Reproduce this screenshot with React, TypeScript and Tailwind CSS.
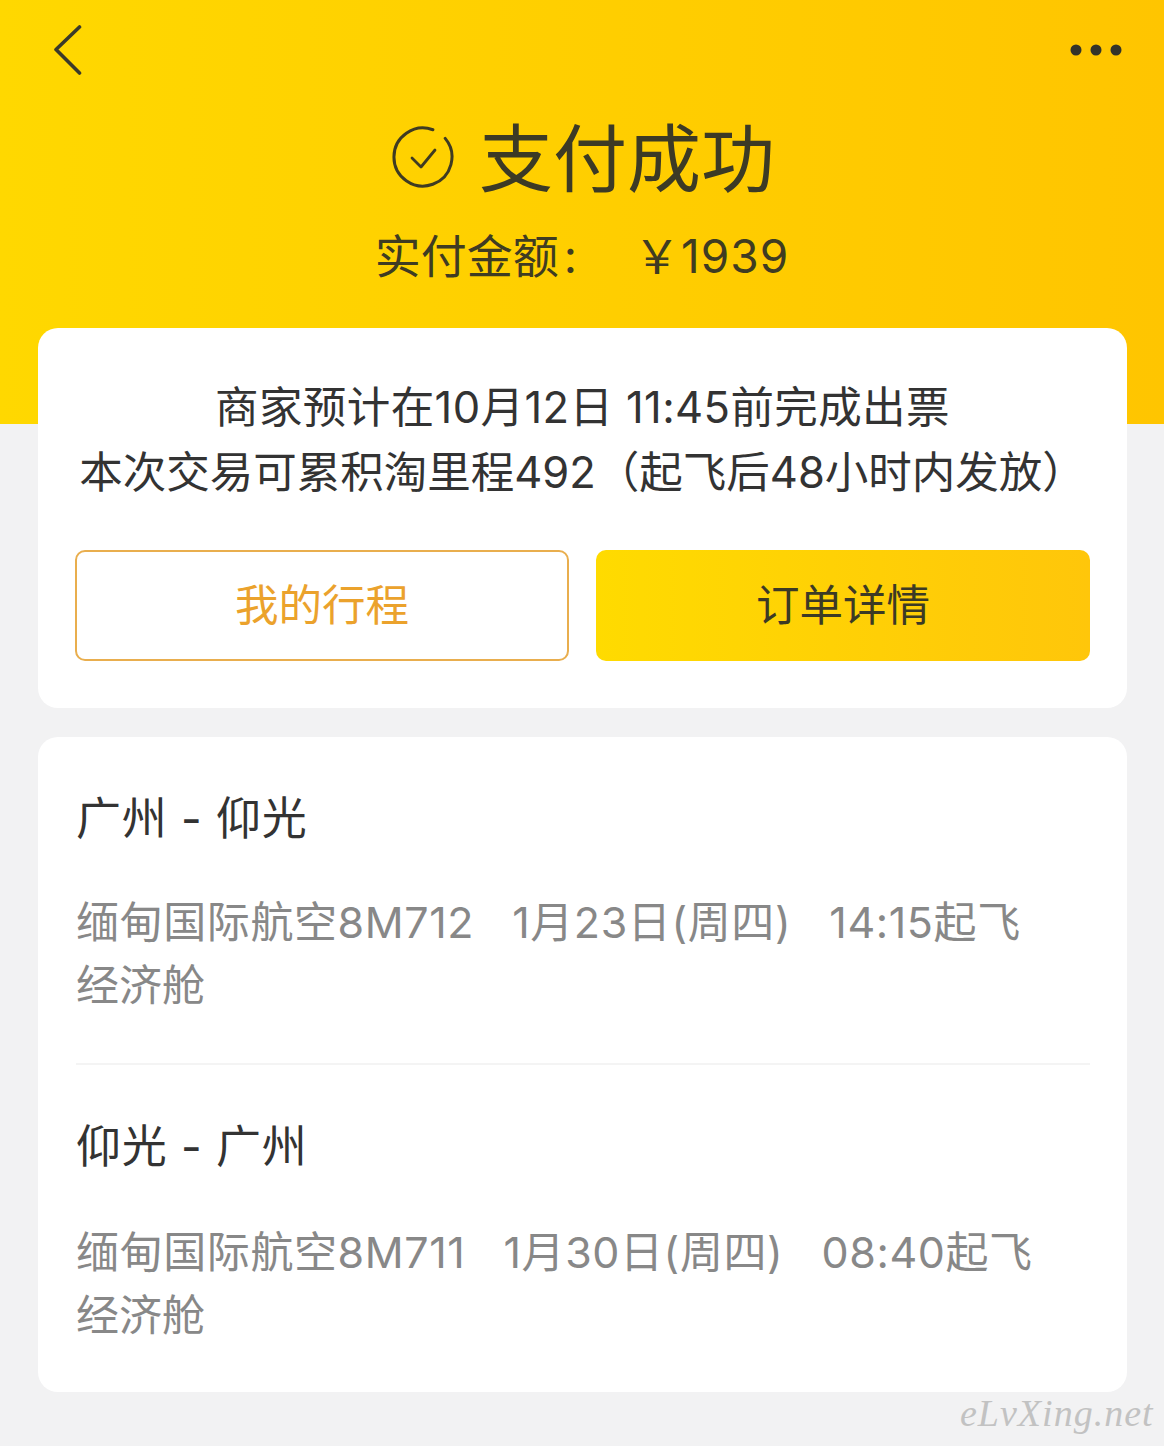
const font = '[font-family:Inter,"Noto_Sans_CJK_SC",sans-serif]';

function BackIcon() {
  return (
    <svg width="30" height="52" viewBox="0 0 30 52" fill="none" className="text-[#3b3a2a]">
      <path d="M27.5 3 L4 25.5 L27.5 49" stroke="currentColor" strokeWidth="3.6" strokeLinecap="round" strokeLinejoin="round" />
    </svg>
  );
}

function MoreIcon() {
  return (
    <svg width="52" height="14" viewBox="0 0 52 14" fill="#33332a">
      <circle cx="6" cy="7" r="5.5" />
      <circle cx="26" cy="7" r="5.5" />
      <circle cx="46" cy="7" r="5.5" />
    </svg>
  );
}

function CheckCircle() {
  return (
    <svg width="62" height="62" viewBox="0 0 62 62" fill="none" stroke="#3f3b22" strokeWidth="3">
      <path d="M40.9 3.75 A29 29 0 1 0 53.2 12.4" strokeLinecap="round" />
      <path d="M20 32 L29 41 L43 24" strokeWidth="2.8" strokeLinecap="round" strokeLinejoin="round" />
    </svg>
  );
}

const legs = [
  { route: '广州 - 仰光', detail: '缅甸国际航空8M712\u00a0\u00a0\u00a01月23日(周四)\u00a0\u00a0\u00a014:15起飞' },
  { route: '仰光 - 广州', detail: '缅甸国际航空8M711\u00a0\u00a0\u00a01月30日(周四)\u00a0\u00a0\u00a008:40起飞' },
];

export default function App() {
  return (
    <div className={`${font} relative h-[1446px] w-[1164px] overflow-hidden bg-[#f2f2f3]`}>
      <header className="h-[424px] bg-gradient-to-r from-[#ffd800] to-[#ffc500] px-[42px] pt-[24px]">
        <div className="flex items-start justify-between pl-[10px]">
          <BackIcon />
          <div className="mt-[19px]"><MoreIcon /></div>
        </div>
        <div className="mt-[43px] flex items-center justify-center gap-[25px] pl-[3px] text-[#3c3a25]">
          <div className="-mt-[4px]"><CheckCircle /></div>
          <h1 className="text-[74px] leading-[80px] font-normal">支付成功</h1>
        </div>
        <p className="mt-[27px] flex justify-center text-[46px] leading-[60px] text-[#3f3c22]">
          <span>实付金额</span>
          <span className="ml-[5px]">:</span>
          <span className="ml-[57px] tracking-[1px]">￥1939</span>
        </p>
      </header>

      <main className="-mt-[96px] flex flex-col gap-[29px] px-[38px]">
        <section className="h-[380px] w-[1089px] rounded-[20px] bg-white px-[37px] pt-[47px]">
          <div className="text-center text-[43.5px] leading-[65px] whitespace-nowrap text-[#333333]">
            <p className="tracking-[0.4px]">商家预计在10月12日 11:45前完成出票</p>
            <p>本次交易可累积淘里程492（起飞后48小时内发放）</p>
          </div>
          <div className="mt-[45px] flex gap-[27px]">
            <button className="flex h-[111px] w-[494px] items-center justify-center rounded-[10px] border-2 border-[#e9ae4e] text-[43.5px] text-[#eba22c]">
              我的行程
            </button>
            <button className="flex h-[111px] w-[494px] items-center justify-center rounded-[10px] bg-gradient-to-r from-[#ffdb00] to-[#ffc60a] text-[43.5px] text-[#3c3a25]">
              订单详情
            </button>
          </div>
        </section>

        <section className="h-[655px] w-[1089px] rounded-[20px] bg-white pr-[37px] pl-[38px]">
          {legs.map((leg, i) => (
            <div key={leg.route} className={i === 0 ? 'h-[328px] border-b-2 border-[#f4f4f4] pt-[51px]' : 'pt-[51px]'}>
              <h2 className="text-[45px] leading-[62px] font-normal tracking-[0.8px] text-[#333333]">{leg.route}</h2>
              <p className={`${i === 0 ? 'mt-[41px]' : 'mt-[43px]'} w-[1000px] text-[43px] leading-[63px] tracking-[0.6px] text-[#888888]`}>
                <span className="whitespace-nowrap">{leg.detail}</span>
                <br />
                <span className="tracking-normal">经济舱</span>
              </p>
            </div>
          ))}
        </section>
      </main>

      <span className="absolute top-[1391px] left-[960px] font-['Liberation_Serif'] text-[38px] leading-[44px] tracking-[1px] text-[#c2c2c2] italic">
        eLvXing.net
      </span>
    </div>
  );
}
